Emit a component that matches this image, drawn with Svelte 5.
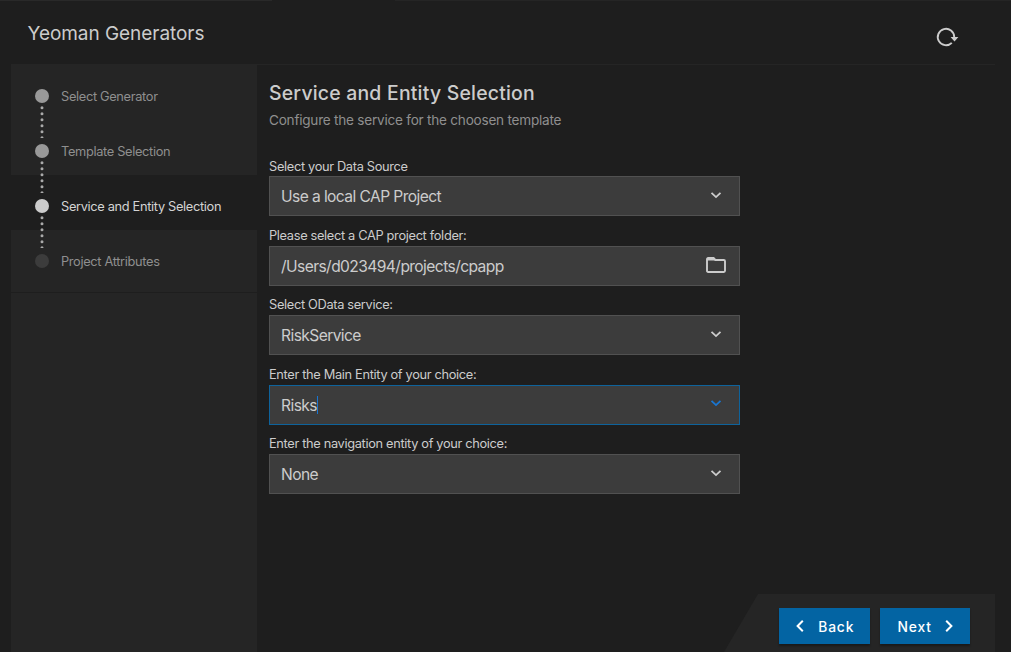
<script>
  const steps = [
    { name: 'Select Generator', state: 'done' },
    { name: 'Template Selection', state: 'done' },
    { name: 'Service and Entity Selection', state: 'current' },
    { name: 'Project Attributes', state: 'todo' }
  ];
  const fields = [
    { label: 'Select your Data Source', value: 'Use a local CAP Project' },
    { label: 'Please select a CAP project folder:', value: '/Users/d023494/projects/cpapp', folder: true },
    { label: 'Select OData service:', value: 'RiskService' },
    { label: 'Enter the Main Entity of your choice:', value: 'Risks', focused: true },
    { label: 'Enter the navigation entity of your choice:', value: 'None' }
  ];
</script>

<div class="app">
  <header>
    <h1>Yeoman Generators</h1>
    <svg class="reload" width="24" height="24" viewBox="0 0 24 24">
      <path d="M16.8 17.8A8.2 8.2 0 1 1 19.2 12" fill="none" stroke="#ccc" stroke-width="1.9" />
      <path d="M15.6 12H23.4L19.5 16.4Z" fill="#ccc" />
    </svg>
  </header>
  <div class="body">
    <nav>
      {#each steps as step, i}
        <div class="step {step.state}">
          <span class="dot"></span>
          <span class="name">{step.name}</span>
          {#if i < steps.length - 1}
            <svg class="dots" width="4" height="32" viewBox="0 0 4 32">
              <path d="M2 1.7V33" stroke="#aaa" stroke-width="3" stroke-linecap="round" stroke-dasharray="0 6" />
            </svg>
          {/if}
        </div>
      {/each}
    </nav>
    <main>
      <h2>Service and Entity Selection</h2>
      <p>Configure the service for the choosen template</p>
      <form>
        {#each fields as field}
          <div class="field">
            <div class="label"><span>{field.label}</span></div>
            <div class="input" class:focused={field.focused}>
              <span class="value">{field.value}</span>
              {#if field.focused}<i class="caret"></i>{/if}
              {#if field.folder}
                <svg class="folder" width="20" height="16" viewBox="0 0 20 16">
                  <path d="M1 2.2Q1 1 2.2 1H7.6L9.4 3H17.8Q19 3 19 4.2V13.8Q19 15 17.8 15H2.2Q1 15 1 13.8Z" fill="none" stroke="#ccc" stroke-width="1.9" />
                  <path d="M1 1H8L10 3.6H1Z" fill="#ccc" />
                </svg>
              {:else}
                <svg class="chevron" width="12" height="8" viewBox="0 0 12 8">
                  <path d="M1.5 1.8L6 6.1L10.5 1.8" fill="none" stroke="currentColor" stroke-width="1.8" />
                </svg>
              {/if}
            </div>
          </div>
        {/each}
      </form>
    </main>
  </div>
  <footer>
    <button>
      <svg width="8" height="12" viewBox="0 0 8 12"><path d="M6.8 0.8L1.6 6L6.8 11.2" fill="none" stroke="#fff" stroke-width="2" /></svg>
      <span>Back</span>
    </button>
    <button class="next">
      <span>Next</span>
      <svg width="8" height="12" viewBox="0 0 8 12"><path d="M1.2 0.8L6.4 6L1.2 11.2" fill="none" stroke="#fff" stroke-width="2" /></svg>
    </button>
  </footer>
</div>

<style>
  :global(body) { margin: 0; background: #1e1e1e; }
  .app {
    position: relative;
    box-sizing: border-box;
    width: 1011px;
    height: 652px;
    overflow: hidden;
    background:
      linear-gradient(#292929, #292929) 0 0 / 272px 1px no-repeat,
      linear-gradient(#252525, #252525) 395px 0 / 616px 1px no-repeat,
      #1e1e1e;
    color: #ccc;
    font-family: Inter, "Liberation Sans", sans-serif;
  }
  header {
    display: flex;
    justify-content: space-between;
    box-sizing: border-box;
    height: 65px;
    margin: 0 16px 0 11px;
    padding: 0 36px 0 16.5px;
    border-bottom: 1px solid #252525;
  }
  h1 { margin: 20px 0 0; font-size: 19px; line-height: 28px; font-weight: 400; letter-spacing: -0.05px; }
  .reload { margin-top: 25px; }
  .body { display: flex; height: 587px; }
  nav { width: 246px; margin-left: 11px; background: #252525; }
  .step {
    position: relative;
    display: flex;
    align-items: flex-start;
    box-sizing: border-box;
    height: 55px;
    padding: 24px 0 0 24px;
    color: #8f8f8f;
  }
  .dot { width: 14px; height: 14px; border-radius: 50%; background: #999; }
  .name { margin: -1px 0 0 12px; font-size: 12.8px; line-height: 18px; letter-spacing: -0.33px; white-space: nowrap; }
  .dots { position: absolute; left: 28.5px; top: 41px; z-index: 1; }
  .current { background: #1e1e1e; color: #d4d4d4; }
  .current .dot { background: #ccc; }
  .todo { height: 63px; border-bottom: 1px solid #1e1e1e; }
  .todo .dot { background: #3c3c3c; }
  main { width: 471px; padding-left: 12px; }
  h2 { margin: 14px 0 0; font-size: 19.4px; line-height: 28px; font-weight: 500; letter-spacing: 0.22px; white-space: nowrap; }
  p { margin: 3px 0 0; font-size: 13.6px; line-height: 20px; letter-spacing: -0.24px; color: #8f8f8f; white-space: nowrap; }
  form { margin-top: 16.8px; }
  .field { height: 69.5px; }
  .label {
    display: flex;
    align-items: flex-end;
    height: 29.5px;
    font-size: 12.8px;
    line-height: 20px;
    letter-spacing: -0.33px;
    white-space: nowrap;
  }
  .field:first-child .label { line-height: 19px; }
  .input {
    display: flex;
    align-items: center;
    box-sizing: border-box;
    height: 40px;
    padding: 0 12px 0 11px;
    border: 1px solid #515151;
    background: #3c3c3c;
    font-size: 15.6px;
    line-height: 24px;
    letter-spacing: -0.59px;
  }
  .value { padding-top: 2px; }
  .focused { border-color: #0e639c; }
  .caret { width: 1px; height: 18px; margin-left: 0.5px; background: #1976d2; }
  .input .chevron { margin: 0 5px 3px auto; color: #ccc; }
  .focused .chevron { color: #1976d2; }
  .input.focused .chevron { color: #1976d2; }
  .input .folder { margin: 0 1px 2px auto; }
  footer {
    position: absolute;
    right: 16px;
    bottom: 0;
    display: flex;
    gap: 10px;
    box-sizing: border-box;
    width: 271px;
    height: 58px;
    padding: 14px 25px 0 55px;
    background: #252525;
    clip-path: polygon(34px 0, 100% 0, 100% 100%, 0 100%);
  }
  button {
    display: flex;
    align-items: center;
    justify-content: space-between;
    box-sizing: border-box;
    width: 91px;
    height: 36px;
    padding: 0 15.8px 0 16.5px;
    border: 0;
    background: #0364a3;
    box-shadow: 0 2px 2px #0005;
    color: #fff;
    font: 500 13.8px/20px Inter, sans-serif;
    letter-spacing: 0.85px;
  }
  button span { padding-top: 2px; }
  .next { width: 90px; padding: 0 17px 0 17.5px; }
</style>
